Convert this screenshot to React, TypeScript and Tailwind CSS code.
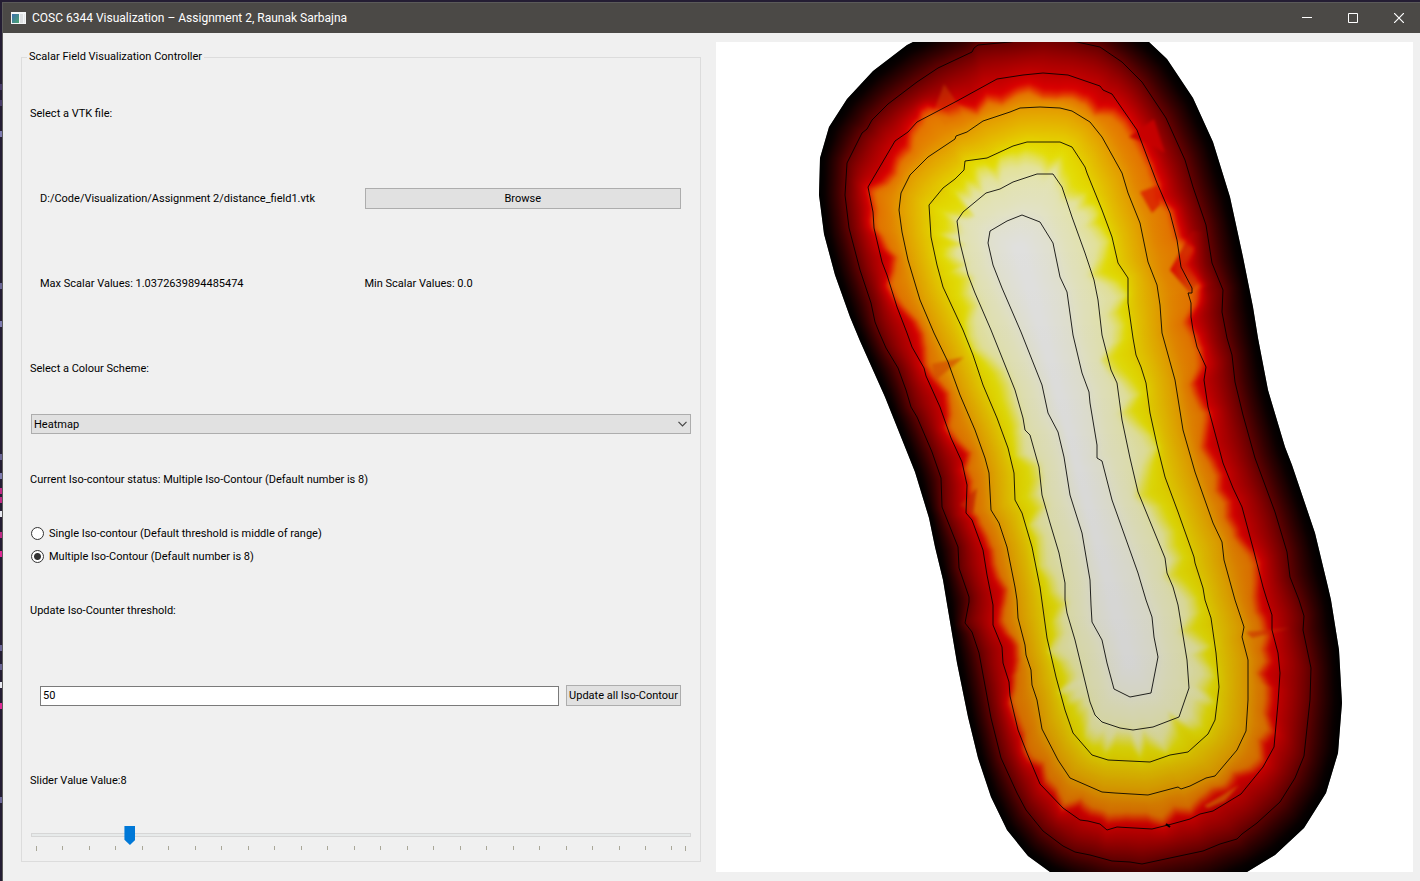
import { useState } from "react";
import type { ReactNode } from "react";

type Pt = [number, number];

const parse = (s: string): Pt[] =>
  s.trim().split(/\s+/).map((p) => p.split(",").map(Number) as Pt);

// Iso-lines of the distance field, from the outer boundary to the innermost level.
const LEVELS: Pt[][] = [
  "1060,8 1000,12 940,30 913,42 907,45 873,71 847,99 829,127 820,158 819,195 824,234 835,275 850,317 860,341 885,397 915,472 929,518 935,547 943,580 947,604 957,663 968,717 978,758 991,797 1007,830 1028,856 1050,872 1100,893 1150,899 1200,893 1247,872 1275,855 1304,828 1326,793 1338,753 1342,703 1339,650 1331,600 1328,587 1315,533 1292,465 1285,447 1268,390 1258,338 1253,307 1243,257 1230,197 1213,142 1193,98 1167,59 1149,42 1110,18",
  "1045,37 1010,42 978,45 974,48 972,52 938,68 917,82 888,104 872,120 867,129 862,133 847,163 845,195 849,228 860,270 871,303 875,322 879,332 886,348 898,368 906,390 911,407 917,417 932,452 941,478 942,507 958,547 959,568 969,597 969,602 965,623 972,632 979,653 991,718 1001,758 1017,793 1026,810 1043,831 1063,846 1075,852 1090,855 1112,861 1130,862 1142,864 1170,858 1203,851 1220,844 1237,839 1242,834 1257,823 1280,802 1295,778 1304,756 1310,700 1311,668 1303,630 1304,616 1299,600 1290,577 1287,552 1275,512 1255,458 1243,415 1235,382 1232,355 1227,338 1222,312 1223,290 1212,263 1206,225 1193,187 1185,160 1166,118 1142,82 1122,62 1100,47 1077,42",
  "1043,73 1023,75 997,79 957,101 917,122 908,132 895,141 868,187 873,212 874,228 882,262 887,275 897,307 907,333 912,347 924,368 926,376 940,407 951,438 962,462 967,485 966,513 972,520 983,550 987,575 993,605 993,625 1002,647 1003,663 1009,682 1010,696 1018,730 1027,753 1040,784 1063,808 1080,820 1088,821 1100,824 1107,830 1117,827 1152,829 1172,824 1190,819 1200,814 1213,811 1241,794 1263,767 1274,747 1278,703 1280,673 1278,653 1272,630 1272,615 1267,600 1263,587 1253,548 1242,507 1233,488 1223,463 1208,407 1204,380 1206,367 1197,347 1193,330 1191,317 1191,303 1188,293 1192,293 1192,288 1181,267 1177,240 1170,213 1157,183 1137,130 1112,94 1103,90 1100,86 1068,75",
  "1060,108 1040,107 1020,108 1010,112 983,121 967,132 956,136 955,139 928,157 910,175 901,193 899,210 902,232 908,260 920,300 934,333 948,362 960,395 975,430 985,458 989,473 991,510 999,523 1007,547 1015,587 1017,600 1018,618 1025,645 1026,655 1031,670 1032,685 1037,700 1042,729 1058,760 1070,778 1102,792 1115,793 1148,795 1178,787 1181,789 1190,786 1206,778 1215,776 1237,750 1246,731 1248,700 1248,660 1242,637 1244,627 1235,600 1224,560 1222,542 1213,523 1195,472 1183,430 1175,380 1162,333 1160,305 1157,285 1148,262 1140,223 1128,193 1122,173 1102,137 1090,122 1072,111",
  "1060,142 1027,142 1013,146 987,158 965,161 964,170 955,179 943,188 929,205 931,237 937,265 943,287 963,330 973,355 983,385 997,418 1008,448 1014,473 1015,500 1022,513 1032,547 1040,587 1047,638 1056,677 1065,710 1073,733 1092,755 1108,760 1150,762 1170,755 1188,752 1208,734 1215,720 1219,687 1216,653 1211,618 1205,600 1203,588 1195,563 1194,557 1178,512 1165,477 1157,445 1150,413 1146,383 1141,367 1136,355 1133,338 1128,303 1128,278 1118,263 1112,237 1102,210 1087,173 1085,167 1072,147",
  "1053,174 1037,174 1013,182 1000,189 986,193 963,212 957,221 960,243 968,275 975,293 991,330 1015,390 1023,418 1025,430 1030,435 1039,467 1042,495 1050,523 1059,553 1065,583 1065,600 1067,613 1075,640 1090,702 1095,715 1102,722 1120,728 1133,730 1153,727 1179,717 1189,688 1187,660 1178,605 1173,587 1167,573 1165,558 1138,492 1130,458 1122,420 1117,383 1111,370 1102,335 1098,300 1094,280 1085,253 1072,217 1062,187",
  "1022,215 1007,221 990,231 988,243 993,265 1002,288 1021,332 1042,385 1048,413 1058,432 1064,457 1070,495 1082,533 1090,580 1091,605 1092,622 1102,640 1107,663 1114,689 1130,697 1151,693 1158,657 1154,637 1152,617 1146,600 1138,573 1112,500 1102,461 1097,458 1097,445 1090,403 1089,392 1082,373 1073,335 1067,292 1060,277 1053,243 1040,222",
].map(parse);

const SPINE_TOP: Pt = [1020, 250];
const SPINE_END: Pt = [1128, 660];

const hash = (n: number) => {
  const v = Math.sin(n * 127.1 + 11.7) * 43758.5453;
  return v - Math.floor(v);
};

// Rays leaving the spine of the shape: top cap, right flank, bottom cap, left flank.
function buildRays() {
  const dx = SPINE_END[0] - SPINE_TOP[0];
  const dy = SPINE_END[1] - SPINE_TOP[1];
  const len = Math.hypot(dx, dy);
  const d: Pt = [dx / len, dy / len];
  const n: Pt = [d[1], -d[0]];
  const rays: { o: Pt; v: Pt }[] = [];
  const CAP = 140;
  const SIDE = 120;
  for (let i = 0; i < CAP; i++) {
    const a = (Math.PI * i) / CAP;
    rays.push({ o: SPINE_TOP, v: [-n[0] * Math.cos(a) - d[0] * Math.sin(a), -n[1] * Math.cos(a) - d[1] * Math.sin(a)] });
  }
  for (let i = 0; i < SIDE; i++) {
    rays.push({ o: [SPINE_TOP[0] + (dx * i) / SIDE, SPINE_TOP[1] + (dy * i) / SIDE], v: n });
  }
  for (let i = 0; i < CAP; i++) {
    const a = (Math.PI * i) / CAP;
    rays.push({ o: SPINE_END, v: [n[0] * Math.cos(a) + d[0] * Math.sin(a), n[1] * Math.cos(a) + d[1] * Math.sin(a)] });
  }
  for (let i = 0; i < SIDE; i++) {
    rays.push({ o: [SPINE_END[0] - (dx * i) / SIDE, SPINE_END[1] - (dy * i) / SIDE], v: [-n[0], -n[1]] });
  }
  return rays;
}

function hit(o: Pt, v: Pt, poly: Pt[]) {
  let best = Infinity;
  for (let i = 0; i < poly.length; i++) {
    const a = poly[i];
    const b = poly[(i + 1) % poly.length];
    const ex = b[0] - a[0];
    const ey = b[1] - a[1];
    const den = v[0] * ey - v[1] * ex;
    if (Math.abs(den) < 1e-9) continue;
    const wx = a[0] - o[0];
    const wy = a[1] - o[1];
    const t = (wx * ey - wy * ex) / den;
    const s = (wx * v[1] - wy * v[0]) / den;
    if (t > 0 && s >= -1e-6 && s <= 1 + 1e-6 && t < best) best = t;
  }
  return Number.isFinite(best) ? best : 0;
}

const STOPS: [number, number[]][] = [
  [0, [0, 0, 0]],
  [0.2, [10, 0, 0]],
  [0.6, [54, 0, 0]],
  [1, [104, 0, 0]],
  [1.5, [162, 0, 0]],
  [1.98, [218, 0, 0]],
  [2.16, [228, 70, 0]],
  [2.32, [228, 116, 0]],
  [2.65, [228, 132, 0]],
  [3, [228, 156, 0]],
  [3.6, [228, 188, 0]],
  [4.1, [228, 216, 0]],
  [4.3, [228, 222, 10]],
  [4.55, [228, 225, 90]],
  [4.8, [228, 227, 156]],
  [5.1, [228, 228, 178]],
  [5.6, [228, 228, 192]],
  [6.1, [227, 227, 210]],
  [6.9, [227, 227, 226]],
];

function colour(level: number) {
  let i = 1;
  while (i < STOPS.length - 1 && STOPS[i][0] < level) i++;
  const [a, ca] = STOPS[i - 1];
  const [b, cb] = STOPS[i];
  const t = Math.min(1, Math.max(0, (level - a) / (b - a)));
  return `rgb(${ca.map((c, k) => Math.round(c + (cb[k] - c) * t)).join(",")})`;
}

// The coarse mesh makes ragged edges where the colour map changes hue.
function ragged(i: number, seed: number, step: number) {
  const k = Math.floor(i / step);
  const f = i / step - k;
  return (hash(k + seed) * (1 - f) + hash(k + 1 + seed) * f) * 2 - 1;
}
const bump = (x: number, c: number, w: number) => Math.exp(-((x - c) ** 2) / (2 * w * w));

function buildBands() {
  const rays = buildRays();
  const radii = rays.map(({ o, v }) => [...LEVELS.map((p) => hit(o, v, p)), 0]);
  const bands: { d: string; fill: string }[] = [];
  for (let level = 0; level < 6.9; level += level > 1.9 && level < 2.4 ? 0.025 : 0.04) {
    const pts = rays.map(({ o, v }, i) => {
      const bias = bump(i, 85, 16) * 0.2 - bump(i, 50, 14) * 0.3 - bump(i, 160, 22) * 0.4 + bump(i, 330, 35) * 0.15;
      const shift =
        bump(level, 2.15, 0.34) * (ragged(i, 3, 9) * 0.3 + ragged(i, 40, 4) * 0.2 + bias + 0.12) +
        bump(level, 4.6, 0.36) * (ragged(i, 90, 8) * 0.4 + ragged(i, 300, 4) * 0.26);
      const l = Math.max(0, Math.min(6.99, level + shift));
      const k = Math.floor(l);
      const r = radii[i][k] + (radii[i][k + 1] - radii[i][k]) * (l - k);
      return `${(o[0] + v[0] * r).toFixed(1)} ${(o[1] + v[1] * r).toFixed(1)}`;
    });
    bands.push({ d: `M${pts.join("L")}Z`, fill: colour(level) });
  }
  return bands;
}

const BANDS = buildBands();
const toPath = (p: Pt[]) => `M${p.map((q) => q.join(" ")).join("L")}Z`;

function FieldPlot() {
  return (
    <svg viewBox="716 42 697 830" className="block h-auto w-full bg-white" role="img" aria-label="Scalar field">
      <defs>
        <clipPath id="outline">
          <path d={toPath(LEVELS[0])} />
        </clipPath>
        <filter id="soften" x="-5%" y="-5%" width="110%" height="110%" colorInterpolationFilters="sRGB">
          <feGaussianBlur stdDeviation="1.5" />
        </filter>
        <linearGradient id="facet" gradientUnits="userSpaceOnUse" x1="1170" y1="0" x2="1206" y2="0">
          <stop offset="0" stopColor="#e00800" />
          <stop offset="1" stopColor="#b40000" stopOpacity="0" />
        </linearGradient>
        <linearGradient id="shade" x1="0" y1="0" x2="0" y2="1">
          <stop offset="0.1" stopColor="#000" stopOpacity="0" />
          <stop offset="1" stopColor="#000" stopOpacity="0.09" />
        </linearGradient>
      </defs>
      <path d={toPath(LEVELS[0])} fill="#000" />
      <g clipPath="url(#outline)">
        <g filter="url(#soften)">
          {BANDS.map((b, i) => (
            <path key={i} d={b.d} fill={b.fill} />
          ))}
          <path d="M944 84l14 20 15 7-28 14-11-14z" fill="#e07000" fillOpacity="0.3" />
          <path d="M1154 119l-25 18 22 8 14 8z" fill="#c80000" fillOpacity="0.9" />
          <path d="M1140 192l18-7 2 20-8 8z" fill="#dc1000" fillOpacity="0.7" />
          <path d="M1192 231l-22 39 20 23 16-20-4-42z" fill="url(#facet)" />
          <path d="M932 364l32-7-29 24z" fill="#d85000" fillOpacity="0.7" />
          <path d="M960 505l17-17-4 26z" fill="#cc2800" fillOpacity="0.7" />
          <path d="M1246 632l44-4-38 10z" fill="#d83000" fillOpacity="0.6" />
          <path d="M1204 806l35-21-14 16-17 7z" fill="#e07000" fillOpacity="0.7" />
        </g>
        <rect x="716" y="42" width="697" height="830" fill="url(#shade)" />
      </g>
      {LEVELS.slice(1).map((p, i) => (
        <path key={i} d={toPath(p)} fill="none" stroke="#000" strokeWidth="1" strokeOpacity="0.85" />
      ))}
      <path d="M1166 824l4 3" stroke="#000" strokeWidth="2" />
    </svg>
  );
}

function Row({ children }: { children: ReactNode }) {
  return <div className="flex h-[85px] items-center">{children}</div>;
}

const TICKS = [...Array.from({ length: 25 }, (_, i) => i * 2), 49];

// Slivers of the editor window behind this one.
const SLIVERS: [number, string][] = [
  [87, "#4a3d6b"], [103, "#4a3d6b"], [134, "#7f7bb0"], [286, "#6b6596"], [324, "#7f7bb0"], [457, "#6b6596"],
  [476, "#7f7bb0"], [491, "#c02a86"], [500, "#c02a86"], [514, "#e8e8f0"], [535, "#c02a86"], [554, "#e02a96"],
  [648, "#6b6596"], [667, "#6b6596"], [685, "#e8e8f0"], [706, "#e02a96"], [800, "#6b6596"],
];

export default function App() {
  const [mode, setMode] = useState("multiple");
  const [value, setValue] = useState(8);

  return (
    <div className="flex min-h-screen overflow-x-clip bg-[#241d33] pt-[2px] font-[Roboto,'Noto_Sans',sans-serif] text-[11px] leading-4 text-black">
      <svg className="-mt-[2px] h-[881px] w-[2px] shrink-0" aria-hidden="true">
        {SLIVERS.map(([y, c]) => (
          <rect key={y} x="0" y={y - 3} width="2" height="6" fill={c} />
        ))}
      </svg>
      <div className="flex min-w-0 flex-1 flex-col border-t border-l border-[#5b5a59] bg-[#f0f0f0]">
        <header className="-mr-[2px] flex h-[30px] items-center bg-[#4b4946] pl-2 text-[12px] text-white">
          <svg width="15" height="12" viewBox="0 0 15 12" aria-hidden="true">
            <defs>
              <linearGradient id="app" x1="0" y1="0" x2="1" y2="1">
                <stop offset="0" stopColor="#3c6fb0" />
                <stop offset="1" stopColor="#4ca56f" />
              </linearGradient>
            </defs>
            <rect width="15" height="12" fill="#f4f6f7" />
            <rect x="1" y="2" width="7" height="9" fill="url(#app)" />
            <rect x="9" y="2" width="3" height="9" fill="#dde0e2" />
            <rect x="13" y="2" width="1" height="9" fill="#e4e7e9" />
          </svg>
          <h1 className="ml-[6px] flex-1">COSC 6344 Visualization – Assignment 2, Raunak Sarbajna</h1>
          <button aria-label="Minimize" className="flex h-full w-[46px] items-center justify-center">
            <svg width="10" height="10" shapeRendering="crispEdges"><path d="M0 4h10v1H0z" fill="#fff" /></svg>
          </button>
          <button aria-label="Maximize" className="flex h-full w-[46px] items-center justify-center">
            <svg width="10" height="10"><path d="M.5.5h9v9h-9z" fill="none" stroke="#fff" /></svg>
          </button>
          <button aria-label="Close" className="flex h-full w-[46px] items-center justify-center">
            <svg width="10" height="10"><path d="M0 0l10 10M10 0L0 10" fill="none" stroke="#fff" strokeWidth="1.2" /></svg>
          </button>
        </header>

        <main className="grid flex-1 grid-cols-[680fr_697fr] items-start gap-[15px] pt-[9px] pr-[7px] pb-[9px] pl-[18px]">
          <fieldset className="mt-[7px] min-w-0 border border-[#dcdcdc] pr-[9px] pb-[10px] pl-2">
            <legend className="-ml-[3px] px-[2px]">Scalar Field Visualization Controller</legend>
            <div className="pt-[6px]">
              <Row>Select a VTK file:</Row>
              <Row>
                <div className="grid flex-1 grid-cols-2 items-center gap-2 px-[10px]">
                  <span className="truncate">D:/Code/Visualization/Assignment 2/distance_field1.vtk</span>
                  <button className="h-[21px] border border-[#adadad] bg-[#e1e1e1]">Browse</button>
                </div>
              </Row>
              <Row>
                <div className="grid flex-1 grid-cols-2 gap-2 px-[10px]">
                  <span>Max Scalar Values: 1.0372639894485474</span>
                  <span>Min Scalar Values: 0.0</span>
                </div>
              </Row>
              <Row>
                <label htmlFor="scheme">Select a Colour Scheme:</label>
              </Row>
              <div className="relative my-[3px] ml-px">
                <select id="scheme" className="block h-5 w-full appearance-none border border-[#adadad] bg-[#e1e1e1] pt-px pl-[2px]">
                  <option>Heatmap</option>
                </select>
                <svg className="pointer-events-none absolute top-[7px] right-[4px]" width="9" height="6" aria-hidden="true">
                  <path d="M.5.8l4 4 4-4" fill="none" stroke="#444" strokeWidth="1.2" />
                </svg>
              </div>
              <Row>Current Iso-contour status: Multiple Iso-Contour (Default number is 8)</Row>
              {[
                ["single", "Single Iso-contour (Default threshold is middle of range)"],
                ["multiple", "Multiple Iso-Contour (Default number is 8)"],
              ].map(([id, text]) => (
                <label key={id} className="flex h-[23px] items-center gap-[5px] pl-px">
                  <input
                    type="radio"
                    name="mode"
                    checked={mode === id}
                    onChange={() => setMode(id)}
                    className="size-[13px] appearance-none rounded-full border border-[#333] bg-white checked:bg-[radial-gradient(circle,#333_3px,#fff_4px)]"
                  />
                  {text}
                </label>
              ))}
              <Row>
                <label htmlFor="threshold">Update Iso-Counter threshold:</label>
              </Row>
              <Row>
                <div className="flex flex-1 items-center gap-[7px] px-[10px]">
                  <input id="threshold" defaultValue="50" className="h-5 min-w-0 flex-1 border border-[#7a7a7a] bg-white px-[2px]" />
                  <button className="h-[21px] w-[115px] border border-[#adadad] bg-[#e1e1e1] whitespace-nowrap">Update all Iso-Contour</button>
                </div>
              </Row>
              <Row>
                <label htmlFor="count">Slider Value Value:{value}</label>
              </Row>
              <div className="ml-px pt-[2px]">
                <input
                  id="count"
                  type="range"
                  min={1}
                  max={50}
                  value={value}
                  onChange={(e) => setValue(Number(e.target.value))}
                  className="block h-5 w-full appearance-none bg-transparent [&::-webkit-slider-runnable-track]:h-1 [&::-webkit-slider-runnable-track]:border [&::-webkit-slider-runnable-track]:border-[#d6d6d6] [&::-webkit-slider-runnable-track]:bg-[#e7eaea] [&::-webkit-slider-thumb]:-mt-2 [&::-webkit-slider-thumb]:h-[19px] [&::-webkit-slider-thumb]:w-[11px] [&::-webkit-slider-thumb]:appearance-none [&::-webkit-slider-thumb]:bg-[#0078d7] [&::-webkit-slider-thumb]:[clip-path:polygon(0_0,100%_0,100%_72%,50%_100%,0_72%)]"
                />
                <div className="px-[5px]">
                  <svg className="block w-full overflow-visible" height="6" shapeRendering="crispEdges" aria-hidden="true">
                    {TICKS.map((t) => (
                      <rect key={t} x={`${(t / 49) * 99.8}%`} y="1" width="1" height={t === 0 || t === 49 ? 5 : 4} fill="#a9a798" />
                    ))}
                  </svg>
                </div>
              </div>
            </div>
          </fieldset>

          <section className="min-w-0">
            <FieldPlot />
          </section>
        </main>
      </div>
    </div>
  );
}
